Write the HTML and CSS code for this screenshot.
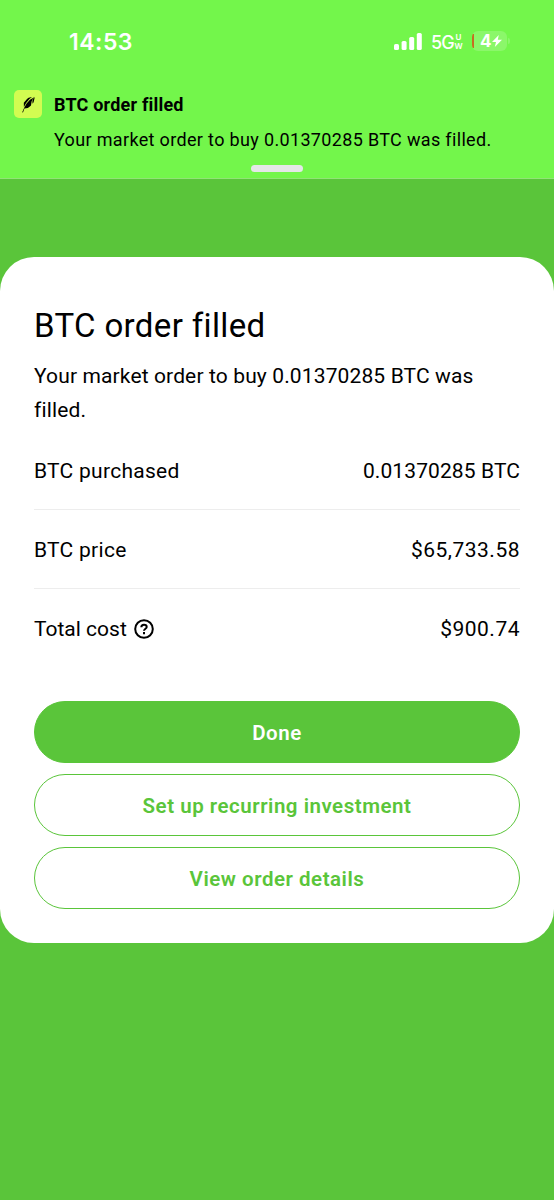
FILE: index.html
```
<!DOCTYPE html>
<html lang="en">
<head>
<meta charset="utf-8">
<title>BTC order filled</title>
<link rel="stylesheet" href="styles.css">
</head>
<body>
<div class="screen">
  <header class="top">
    <div class="status">
      <span class="time">14:53</span>
      <svg class="signal" width="28" height="17" viewBox="0 0 28 17" fill="#fff"><rect x="0" y="11" width="5" height="6" rx="1.6"/><rect x="7.6" y="8" width="5" height="9" rx="1.6"/><rect x="15.2" y="4" width="5" height="13" rx="1.6"/><rect x="22.8" y="0" width="5" height="17" rx="1.6"/></svg>
      <span class="net">5G</span>
      <span class="uw"><span>U</span><span>W</span></span>
      <span class="battery"><span class="level"></span><span class="charge">4</span><svg width="10" height="12" viewBox="0 0 10 12"><path d="M6.8 0 0 7h4L2.8 12 10 4.8H5.8z" fill="#fff"/></svg></span>
      <span class="cap"></span>
    </div>
    <div class="notice">
      <span class="app"><svg width="28" height="28" viewBox="0 0 28 28"><path d="M8.2 22.3 9 22.5 10.4 18.6 13.8 18 15.5 16.8 17 15.4 17.6 11.5 19.4 7.8 16 9.8 12.6 13.5 10.2 17.7ZM9.9 17 9.8 12.8 13 8.9 14.6 7.7 18 7 15.4 9.1 12.1 12.9ZM18.5 13.8 19.6 12.3 20.6 8 20 6.8 18.4 11Z"/></svg></span>
      <div class="notice-copy">
        <div class="notice-title">BTC order filled</div>
        <div class="notice-text">Your market order to buy 0.01370285 BTC was filled.</div>
      </div>
    </div>
    <div class="handle"></div>
  </header>
  <main class="card">
    <h1>BTC order filled</h1>
    <p>Your market order to buy 0.01370285 BTC was filled.</p>
    <div class="rows">
      <div class="row"><span>BTC purchased</span><span class="quantity">0.01370285 BTC</span></div>
      <div class="row"><span>BTC price</span><span class="money">$65,733.58</span></div>
      <div class="row"><span class="label">Total cost<svg width="20" height="20" viewBox="0 0 20 20" fill="none" stroke="#000" stroke-width="2"><circle cx="10" cy="10" r="8.8"/><path d="M7.3 8.2C7.3 6.6 8.4 5.7 10 5.7S12.7 6.6 12.7 8C12.7 9.7 10 9.8 10 11.8"/><path d="M10 13v2.2"/></svg></span><span class="money">$900.74</span></div>
    </div>
    <div class="actions"><button class="primary">Done</button><button>Set up recurring investment</button><button>View order details</button></div>
  </main>
</div>
</body>
</html>
```
FILE: styles.css
```
*{box-sizing:border-box}
body{margin:0;background:#5ac53a;font-family:Roboto,sans-serif;color:#000}
.screen{height:1200px}
.top{height:179px;background:#73f64b;padding-top:28px;border-bottom:1px solid #91e476}
.status{display:flex;align-items:center;height:28px;padding-left:69px;color:#fff}
.signal{margin-top:-2px}
.time{width:325px;font:600 23px Inter,sans-serif;letter-spacing:.5px}
.net{width:23px;margin-left:9px;font:500 18px Inter,sans-serif;letter-spacing:-1px}
.uw{display:grid;width:9px;grid-template-rows:9px 9px;font:600 8px/9px Inter,sans-serif;justify-items:center}
.battery{display:flex;flex:none;align-items:center;width:35px;height:20px;margin:-2px 0 0 9px;background:#8bf76a;border-radius:6px;overflow:hidden}
.level{width:2px;height:14px;background:#c66d22}
.charge{font:700 17px Inter,sans-serif;margin-left:6px}
.cap{width:2px;height:6px;margin:-2px 0 0 1px;background:#8bf76a;border-radius:0 2px 2px 0}
.notice{display:flex;padding:34px 14px 0;height:105px;gap:12px}
.app{width:28px;height:28px;background:#d2fc51;border-radius:5px}
.notice-title{font-size:18px;line-height:22px;font-weight:700;margin-top:4px;letter-spacing:.2px}
.notice-text{font-size:18px;line-height:22px;margin-top:13px;letter-spacing:.34px}
.handle{width:52px;height:7px;border-radius:4px;background:#e4e7e8;margin:4px auto 0}
.card{margin-top:78px;height:686px;background:#fff;border-radius:34px;padding:49px 34px 0}
h1{margin:0;font-size:33px;line-height:40px;font-weight:400;letter-spacing:.35px}
p{margin:13px 0 0;font-size:21px;line-height:34px;letter-spacing:.13px}
.rows{margin-top:4px}
.row{display:flex;justify-content:space-between;height:79px;padding-top:2px;align-items:center;font-size:21px;letter-spacing:.28px;border-bottom:1px solid #ededed}
.row:last-child{padding-top:1px;border-color:transparent}
.quantity{letter-spacing:.1px}
.money{letter-spacing:.5px}
.label{display:flex;align-items:center;gap:7px;letter-spacing:0}
.actions{display:grid;gap:11px;margin-top:33px}
button{height:62px;padding:2px 0 0;border-radius:31px;border:1px solid #5ac53a;background:#fff;color:#5ac53a;font:600 20.5px Roboto,sans-serif;letter-spacing:.52px}
.primary{background:#5ac53a;color:#fff}
```
